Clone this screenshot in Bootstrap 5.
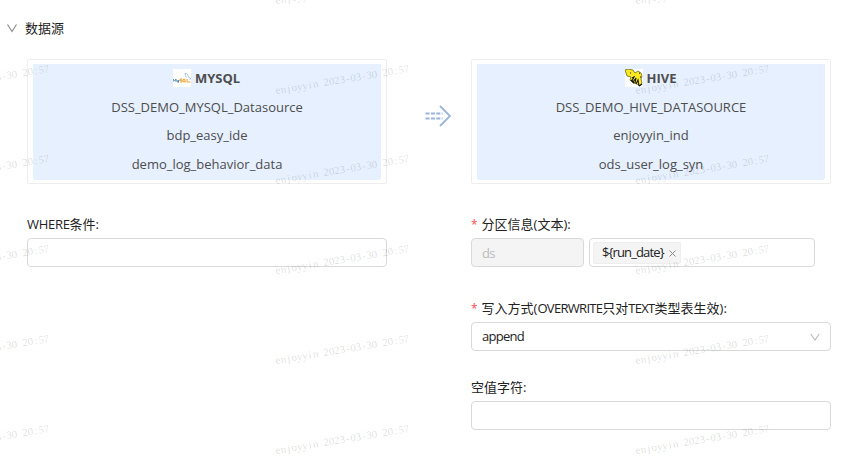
<!DOCTYPE html>
<html lang="zh-CN">
<head>
<meta charset="utf-8">
<meta name="viewport" content="width=device-width, initial-scale=1">
<title>数据源</title>
<link href="https://cdn.jsdelivr.net/npm/bootstrap@5.3.0/dist/css/bootstrap.min.css" rel="stylesheet">
<style>
body{font:13px/20px "Open Sans","Noto Sans CJK SC",sans-serif;color:#222;height:461px;overflow:hidden;background:#fff}
.page{padding:18px 25px 0 27px}
.section-head{margin-left:-21px;height:20px;gap:7px}
.pair{display:grid;grid-template-columns:360px 84px 360px}
.sources{margin-top:21px}
.source-box{height:125px;padding:4px 5px 3px 5px;border:1px solid #eee;border-radius:2px}
.source-body{height:116px;background:#e6f0ff;color:#4d4d4d;border-radius:0 0 3px 3px;line-height:28.6px}
.source-title{font-weight:700;height:28.6px;gap:4px;padding-right:1px}
.source-title span{line-height:26px;margin-top:-1px}
.flow-arrow{margin:0 0 12px 18px}
.fields{padding-top:30px}
.mode-label{margin-top:31px}
.empty-label{margin-top:26px}
.form-label{line-height:20px;height:20px}
.latin{letter-spacing:-.7px}
.latin-where{letter-spacing:-.3px}
.form-control{height:29px;min-height:0;border:1px solid #d9d9d9;border-radius:4px;padding:1px 10px 0;font-size:13px;color:#222;letter-spacing:-.75px}
.form-control:disabled{background:#f4f4f4;color:#bbb}
.part-name{width:113px}
.part-value{width:226px;margin-left:5px;padding-left:3px}
.required::before{content:"*";color:#ff4d4f;margin-right:4px;font-size:12px}
.tag-item{height:22px;background:#f4f4f4;border:1px solid #eee;border-radius:2px;padding:0 4px 0 8px;gap:5px;letter-spacing:-.87px}
.watermark{left:0;top:0;z-index:5;pointer-events:none}
</style>
<script src="https://cdn.jsdelivr.net/npm/bootstrap@5.3.0/dist/js/bootstrap.bundle.min.js"></script>
</head>
<body class="position-relative">
<main class="page">
  <div class="section-head d-flex align-items-center">
    <svg width="12" height="12" viewBox="0 0 12 12" fill="none" stroke="#888" stroke-width="1.1"><path d="M1.5 2.5 6 9.5 10.5 2.5"/></svg>
    <span>数据源</span>
  </div>
  <div class="pair sources">
    <div class="source-box"><div class="source-body text-center">
      <div class="source-title d-flex align-items-center justify-content-center">
        <svg width="18" height="18" viewBox="0 0 18 18"><path fill="#fff" d="M0 0h18v18H0z"/><path d="M0 13v-3l1.5 2L3 10v3M4 11l1 2 1-2-1 3" fill="none" stroke="#4d859f" stroke-width=".9"/><path d="M9 10H7v1.3h2V13H7M10 10.3h2v2.4h-2zm1.5 1.5 1 1.5M14 10v3h3.5" fill="none" stroke="#f0a334" stroke-width="1"/><path d="M12 4.5c3-.6 2.8 2.5 4.2 4.2l1.5 1-1.3 1M12 4.5l.9 3 .8 1" fill="none" stroke="#8fb6c8" stroke-width=".8"/></svg>
        <span>MYSQL</span>
      </div>
      <div>DSS_DEMO_MYSQL_Datasource</div><div>bdp_easy_ide</div><div>demo_log_behavior_data</div>
    </div></div>
    <div class="d-flex align-items-center justify-content-center">
      <svg class="flow-arrow" width="26" height="22" viewBox="0 0 26 22" fill="none" stroke="#9ab4dc"><path d="M.5 8.5h17M.5 13.5h17" stroke-width="2" stroke-dasharray="4 1.4"/><path d="M15 1l10 10-10 10" stroke-width="1.8"/></svg>
    </div>
    <div class="source-box"><div class="source-body text-center">
      <div class="source-title d-flex align-items-center justify-content-center">
        <svg width="18" height="18" viewBox="0 0 18 18"><path fill="#fff" d="M0 0h18v18H0z"/><path d="M0 1l3-1 5 1 2 3 3-2 3 2 1 3-1 3 1 4-2 3-3-2-4-1-3-3 1-3-4-1z" fill="#fbe91d" stroke="#39340a" stroke-width=".6"/><path d="M7 9l2-1-2 4M8 13l3-4-1 5M11 15l2-4 1 6M14 17l3-2M6 11l3 3" fill="none" stroke="#111" stroke-width="1.1"/><path d="M14 4.2h1M15 8h1M5 4h1" stroke="#111"/></svg>
        <span>HIVE</span>
      </div>
      <div>DSS_DEMO_HIVE_DATASOURCE</div><div>enjoyyin_ind</div><div>ods_user_log_syn</div>
    </div></div>
  </div>
  <div class="pair">
    <div class="fields"><label class="form-label d-block mb-1" for="where"><span class="latin-where">WHERE</span>条件:</label><input class="form-control" id="where"></div>
    <div></div>
    <div class="fields">
      <label class="form-label d-block mb-1 required" for="part">分区信息(文本):</label>
      <div class="d-flex">
        <input class="form-control part-name" id="part" value="ds" disabled>
        <div class="form-control part-value d-flex align-items-center"><span class="tag-item d-flex align-items-center"><span>${run_date}</span><svg width="7" height="7" viewBox="0 0 7 7" stroke="#888" stroke-width="1"><path d="M.5.5l6 6M6.5.5l-6 6"/></svg></span></div>
      </div>
      <label class="form-label mode-label d-block mb-1 required" for="mode">写入方式(<span class="latin">OVERWRITE</span>只对<span class="latin">TEXT</span>类型表生效):</label>
      <div class="form-control d-flex align-items-center justify-content-between" id="mode"><span>append</span><svg width="10" height="10" viewBox="0 0 10 10" fill="none" stroke="#bbb" stroke-width="1.1"><path d="M.8 2 5 8 9.2 2"/></svg></div>
      <label class="form-label empty-label d-block mb-1" for="empty">空值字符:</label>
      <input class="form-control" id="empty">
    </div>
  </div>
</main>
<svg class="watermark position-absolute" width="856" height="461" viewBox="0 0 856 461" aria-hidden="true">
  <g id="marks" font-family="'Liberation Serif',serif" font-size="10.8" fill="#000" fill-opacity=".15"></g>
  <g id="faint" font-family="'DejaVu Sans Mono',monospace" font-size="16" fill="#000" fill-opacity=".01"></g>
</svg>
<script>
// Every character of a watermark gets the same advance.
function put(group,text,x,y,angle,step){
  const t=document.createElementNS('http://www.w3.org/2000/svg','text');
  t.textContent=text;
  t.setAttribute('transform',`translate(${x} ${y}) rotate(${angle})`);
  t.setAttribute('x',[...text].map((c,i)=>(i*step+(/[ij:-]/.test(c)?1:0)).toFixed(2)).join(' '));
  document.getElementById(group).appendChild(t);
}
for(let y=4;y<500;y+=90)for(let x=-84;x<856;x+=360)put('marks','enjoyyin 2023-03-30 20:57',x,y,-9.3,5.42);
for(const y of [81,223,368])for(const x of [-146,157,460,765])put('faint','xinyunzhou, 2023-03-30',x,y,-1,9.7);
</script>
</body>
</html>
